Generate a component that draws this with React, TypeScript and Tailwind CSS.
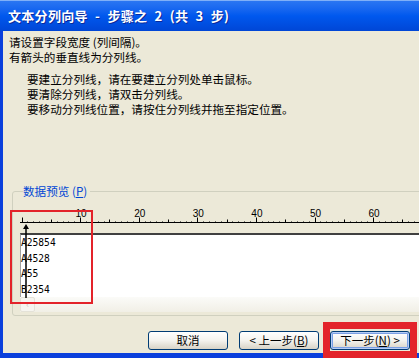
const ticks = Array.from({ length: 69 }, (_, k) => k);

const Ruler = () => {
  return (
    <svg width="400" height="28" className="block">
      <line x1="0" y1="17.5" x2="400" y2="17.5" stroke="#000" strokeWidth="1" />
      {ticks.map((k) => {
        const x = Math.round(1.5 + 5.86 * k) + 0.5;
        const h = k % 10 === 0 ? 5 : k % 5 === 0 ? 3 : 1;
        return <line key={k} x1={x} y1={17.5 - h} x2={x} y2={17.5} stroke="#000" strokeWidth="1" />;
      })}
      {[10, 20, 30, 40, 50, 60].map((n) => (
        <text
          key={n}
          x={1.5 + 5.86 * n + 1}
          y="12"
          textAnchor="middle"
          fontSize="10"
          fontFamily="Liberation Sans, sans-serif"
          fill="#000"
        >
          {n}
        </text>
      ))}
    </svg>
  );
};

const XpButton = ({ children, focused }: { children: React.ReactNode; focused?: boolean }) => {
  return (
    <button
      className={
        "h-[19px] w-[80px] rounded-[3px] border border-[#003c74] bg-gradient-to-b from-[#ffffff] via-[#f4f3ee] to-[#d8d3c6] text-[11.5px] leading-none text-black " +
        (focused ? "shadow-[inset_0_0_0_1px_#b7cdf5,inset_0_0_0_2px_#7a9fe4]" : "")
      }
    >
      {children}
    </button>
  );
};

export default function App() {
  return (
    <div className="relative flex h-[358px] w-[419px] flex-col overflow-hidden bg-[#ece9d8] font-['Noto_Sans_CJK_SC',sans-serif] text-black">
      <div className="flex h-[31px] shrink-0 items-center border-t border-[#7fb0f8] bg-gradient-to-b from-[#2a76f2] via-[#0058ee] to-[#0046d6] pl-[8px] text-[13px] font-bold tracking-[0.3px] text-white [word-spacing:4px] [text-shadow:1px_1px_0_#0a2a9a]">
        文本分列向导 - 步骤之 2 (共 3 步)
      </div>

      <div className="flex flex-1 flex-col border-b-[5px] border-l-[3px] border-[#0a3fdc]">
        <div className="mt-[3.5px] pl-[6px] text-[11.6px] leading-[15px]">
          <p>请设置字段宽度 (列间隔)。</p>
          <p>有箭头的垂直线为分列线。</p>
        </div>
        <div className="mt-[7.5px] pl-[24px] text-[11.6px] leading-[15px]">
          <p>要建立分列线，请在要建立分列处单击鼠标。</p>
          <p>要清除分列线，请双击分列线。</p>
          <p>要移动分列线位置，请按住分列线并拖至指定位置。</p>
        </div>

        <fieldset className="ml-[9px] mt-[67.5px] w-[420px] rounded-[3px] border border-[#d0d0bf] pb-[3px] pl-[7px] pt-[7.5px]">
          <legend className="ml-[3px] pr-[3px] text-[11.6px] leading-[13px] text-[#0046d5]">
            数据预览 (<span className="underline">P</span>)
          </legend>
          <div className="relative">
            <Ruler />
            <div className="h-[64px] border-l border-t-2 border-l-[#a0a0a0] border-t-[#404040] bg-white font-['DejaVu_Sans_Mono',monospace] text-[9.6px] leading-[15.5px]">
              <div>A25854</div>
              <div>A4528</div>
              <div>A55</div>
              <div>B2354</div>
            </div>
            <svg width="8" height="74" className="absolute left-[2px] top-[19px]">
              <polygon points="4,0 1,5 7,5" fill="#000" />
              <line x1="4" y1="5" x2="4" y2="74" stroke="#000" strokeWidth="1.5" />
            </svg>
            <div className="flex h-[15px] bg-gradient-to-b from-[#fbfbf8] to-[#f1efe6]">
              <div className="flex w-[15px] items-center justify-center rounded-[2px] border border-[#e4e2d8] bg-[#f6f5f0] text-[9px] leading-none text-[#c8c6bc]">
                ‹
              </div>
            </div>
          </div>
        </fieldset>

        <div className="mt-[15px] flex justify-end gap-[11px] pr-[9px]">
          <XpButton>
            <span className="inline-block w-[71px]">取消</span>
          </XpButton>
          <XpButton>
            &lt; 上一步(<span className="underline">B</span>)
          </XpButton>
          <XpButton focused>
            下一步(<span className="underline">N</span>) &gt;
          </XpButton>
        </div>
      </div>

      <div className="pointer-events-none absolute left-[10px] top-[210px] h-[94px] w-[83px] border-2 border-[#e3232a]" />
      <div className="pointer-events-none absolute left-[323px] top-[322px] h-[36px] w-[94px] border-[7px] border-[#e3232a]" />
    </div>
  );
}
